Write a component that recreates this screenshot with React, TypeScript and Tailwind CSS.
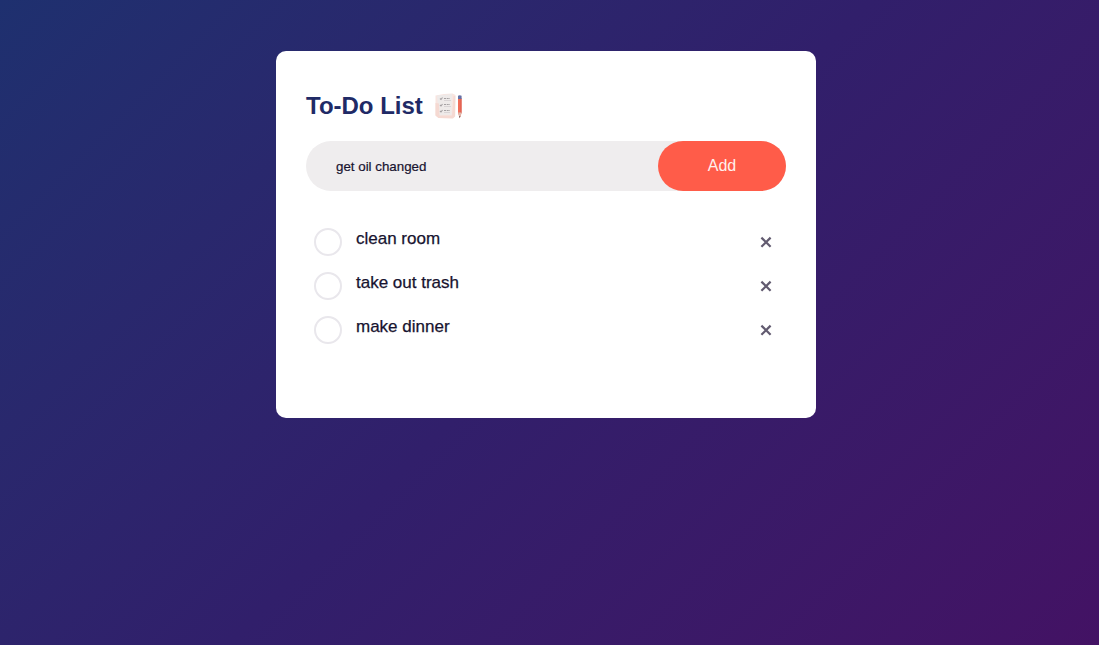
import { useState } from "react";

function ChecklistIcon() {
  return (
    <svg width="30" height="30" viewBox="0 0 30 30" aria-hidden="true">
      <path d="M2.5 4.5 Q11 2.5 19.5 2.5 L22.5 4 L22.2 25.5 L20 27.5 L5.5 27 L2.5 24.5 Z" fill="#f8e5e0" />
      <path d="M4 4.5 L19 3 L18.5 24 L6 25 Z" fill="#eeeae9" />
      <path d="M2.5 12 L6 12.5 L6.5 24.5 L19 24.5 L20.5 5 L22.3 5 L22 25.5 L19.8 27.3 L5.5 27 L2.5 24.5 Z" fill="#f5d9d2" />
      <g fill="none" stroke="#a5a1a3" strokeWidth="1.1">
        <path d="M7 7.5 l1 1 l1.5 -2 M7 14 l1 1 l1.5 -2 M7 20 l1 1 l1.5 -2" />
        <path d="M11 7.5 H17 M11 13.5 H17 M11 19.5 H17" strokeDasharray="2 0.7" />
      </g>
      <path d="M11 9.5 H18 M11 15.5 H18 M11 21.5 H17" stroke="#d3cecf" strokeWidth="0.8" />
      <path d="M25 7 H28.6 V22 L26.8 27 L25 22 Z" fill="#f16d59" />
      <path d="M25 4.8 Q26.8 3.5 28.6 4.8 V8 H25 Z" fill="#6670a4" />
      <path d="M28 8 V22" stroke="#d3594b" strokeWidth="0.8" />
      <path d="M25 21.5 H28.6 L26.8 27 Z" fill="#dcbcb0" />
      <path d="M26.2 25 H27.4 L26.8 27.3 Z" fill="#5b4850" />
    </svg>
  );
}

const initialTasks = ["clean room", "take out trash", "make dinner"];

export default function App() {
  const [tasks, setTasks] = useState(initialTasks);
  const [draft, setDraft] = useState("get oil changed");
  const [done, setDone] = useState<string[]>([]);

  const addTask = () => {
    const text = draft.trim();
    if (text && !tasks.includes(text)) {
      setTasks([...tasks, text]);
      setDraft("");
    }
  };

  const toggle = (task: string) =>
    setDone(done.includes(task) ? done.filter((item) => item !== task) : [...done, task]);

  return (
    <main className="flex min-h-screen items-start justify-center bg-linear-135 from-[#1e306f] via-[#311f6b] to-[#431264] pt-[51px] pr-[7px] font-['Liberation_Sans',Arial,sans-serif]">
      <section className="h-[367px] w-[540px] rounded-[10px] bg-white px-[30px] pt-[39px]">
        <h1 className="flex h-[31px] items-center text-2xl font-bold text-[#202a66]">
          To-Do List
          <span className="ml-2.5">
            <ChecklistIcon />
          </span>
        </h1>
        <div className="mt-5 flex h-[50px] items-center rounded-full bg-[#efedee] pl-[30px]">
          <input
            aria-label="New task"
            value={draft}
            onChange={(event) => setDraft(event.target.value)}
            className="min-w-0 flex-1 bg-transparent pt-0.5 text-[13.333px] text-[#17132f] outline-none [-webkit-text-stroke:0.2px_#17132f]"
          />
          <button onClick={addTask} className="h-[50px] w-[128px] rounded-full bg-[#ff5c49] text-base text-[#fff0ed]">
            Add
          </button>
        </div>
        <ul className="mt-[26px]">
          {tasks.map((task) => (
            <li key={task} className="flex h-11 items-start">
              <button
                aria-label={`Toggle ${task}`}
                onClick={() => toggle(task)}
                className={`mt-[11px] ml-2 size-7 rounded-full border-2 border-[#e9e7ec] ${done.includes(task) ? "bg-[#ff5c49]" : "bg-white"}`}
              />
              <span className="ml-3.5 flex-1 pt-[9px] text-[17px] leading-[25px] text-[#17132f] [-webkit-text-stroke:0.25px_#17132f]">{task}</span>
              <button
                aria-label={`Remove ${task}`}
                onClick={() => setTasks(tasks.filter((item) => item !== task))}
                className="mt-2 mr-[5px] flex h-[34px] w-[30px] items-center justify-center"
              >
                <svg width="12" height="12" viewBox="0 0 12 12" fill="none" stroke="#625b70" strokeWidth="2.2">
                  <path d="M1.4 1.6 L10.6 10.8 M10.6 1.6 L1.4 10.8" />
                </svg>
              </button>
            </li>
          ))}
        </ul>
      </section>
    </main>
  );
}
